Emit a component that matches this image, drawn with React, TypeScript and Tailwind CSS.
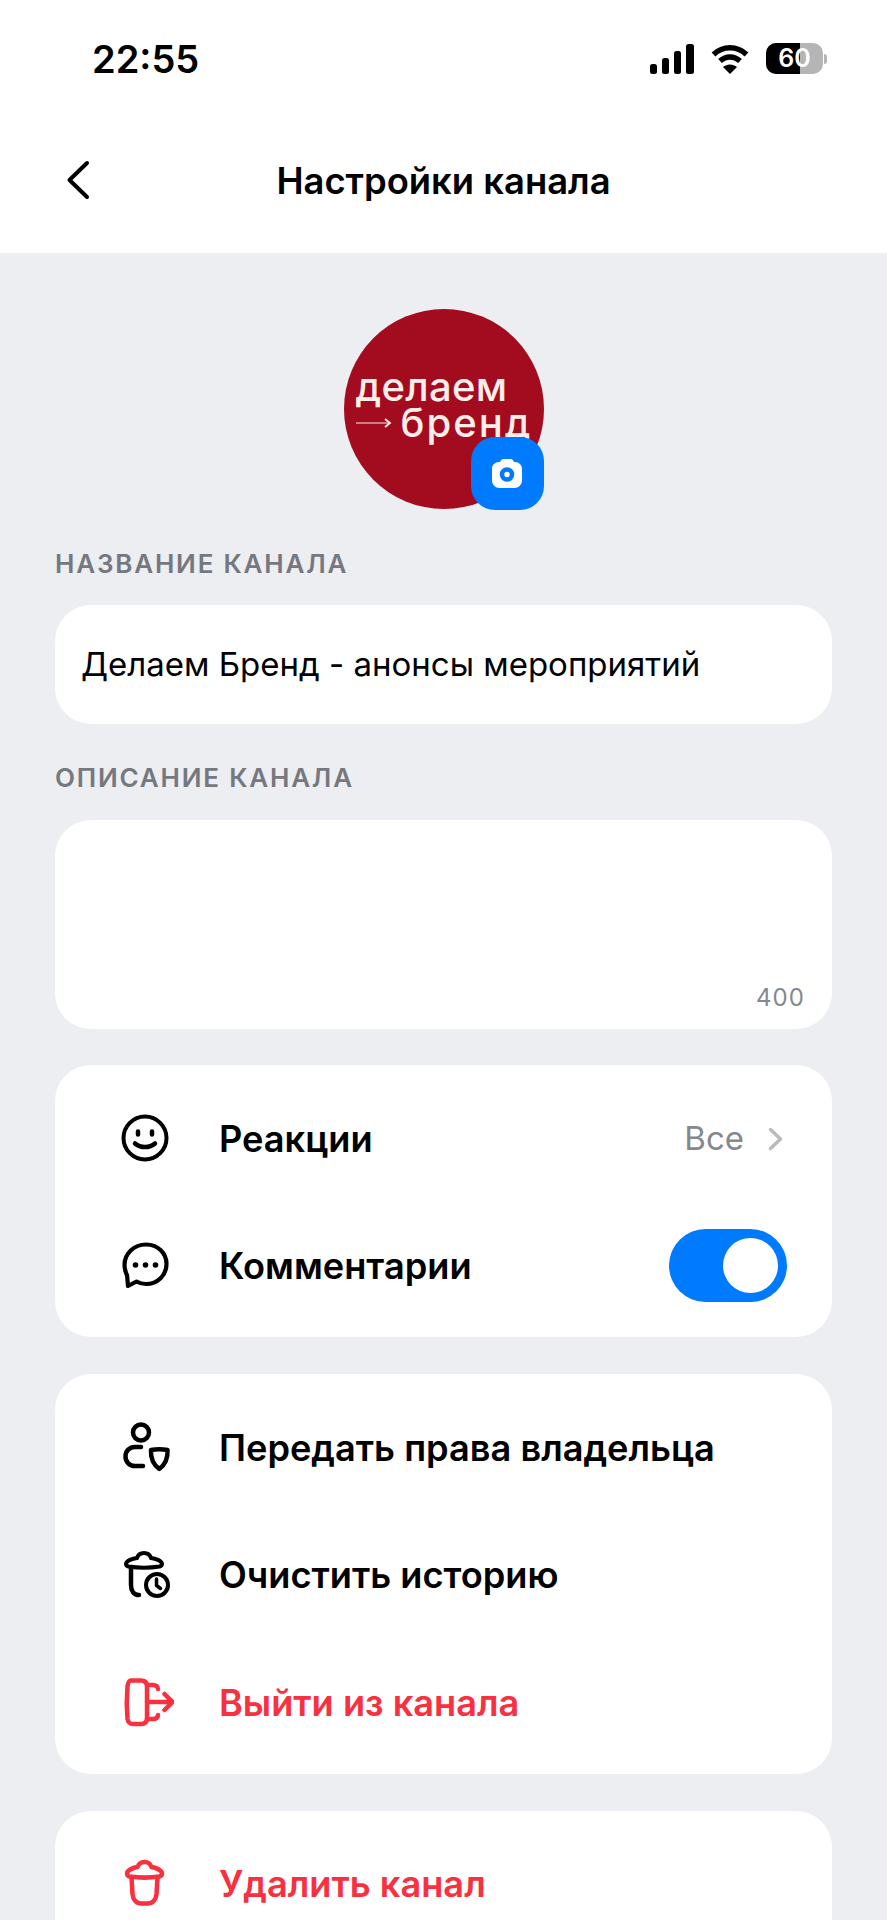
import React from 'react';

const red = 'text-[#f9303f]';

const Smile = () => (
  <svg width="50" height="50" viewBox="0 0 50 50" fill="none" stroke="currentColor" strokeWidth="4" strokeLinecap="round">
    <circle cx="25" cy="25" r="21.500" />
    <path d="M15 30.500c5.500 4.800 14.500 4.800 20 0" strokeWidth="4.500" />
    <path d="M18 18.500v3M32 18.500v3" strokeWidth="4.500" />
  </svg>
);

const Comment = () => (
  <svg width="50" height="50" viewBox="0 0 50 50" fill="none" stroke="currentColor" strokeWidth="4.200" strokeLinecap="round" strokeLinejoin="round">
    <path d="M26 4.500C14 4.500 4.500 13.500 4.500 25c0 4 1.200 7.500 2.600 10.500l.9 10.500 8.500-4.500c2.800 1.600 6 2.500 9.500 2.500 11.500 0 20.500-8.800 20.500-20S37.500 4.500 26 4.500z" />
    <circle cx="15.500" cy="25" r="2.800" fill="currentColor" stroke="none" />
    <circle cx="25.500" cy="25" r="2.800" fill="currentColor" stroke="none" />
    <circle cx="35.500" cy="25" r="2.800" fill="currentColor" stroke="none" />
  </svg>
);

const OwnerShield = () => (
  <svg width="52" height="52" viewBox="0 0 52 52" fill="none" stroke="currentColor" strokeWidth="4.500" strokeLinecap="round" strokeLinejoin="round">
    <circle cx="21" cy="11.500" r="8" />
    <path d="M21 26h-6C9.500 26 5.500 30 5.500 35.500S9.500 45 15 45h8" />
    <path d="M31 29c5.500-1 11-1 16.500 0 .5 8-1.500 14-8.250 19C32.500 43 30.500 37 31 29z" />
  </svg>
);

const TrashClock = () => (
  <svg width="50" height="50" viewBox="0 0 50 50" fill="none" stroke="currentColor" strokeWidth="4.500" strokeLinecap="round" strokeLinejoin="round">
    <path d="M6 15c0-3.500 7-5.500 11-6 1-3 4-5 7-5s6 2 7 5c4 .5 11 2.500 11 6 0 1-1 2-2.500 2.500-10 1.500-21 1.500-31 0C7 17 6 16 6 15z" strokeWidth="4" />
    <path d="M11 19v17c0 6 3 10 8 10" />
    <circle cx="37" cy="36" r="11" strokeWidth="4" />
    <path d="M36.500 30v6.500l4 3" strokeWidth="3.500" />
  </svg>
);

const Leave = () => (
  <svg width="54" height="50" viewBox="0 0 54 50" fill="none" stroke="currentColor" strokeWidth="4.500" strokeLinecap="round" strokeLinejoin="round">
    <path d="M11 3.500h10c4 0 6 2 6 6V41c0 4-2 6-6 6H13c-3.500 0-5-2-5.500-5C6.500 31 6.500 20 7.500 9.500 8 6 9 3.500 11 3.500z" />
    <path d="M27 8h6c3 0 5 1.500 5 4M27 42h6c3 0 5-1.500 5-4" />
    <path d="M27 25h25M44.500 17l8 8-8 8" />
  </svg>
);

const Trash = () => (
  <svg width="50" height="50" viewBox="0 0 50 50" fill="none" stroke="currentColor" strokeWidth="4.500" strokeLinecap="round" strokeLinejoin="round">
    <path d="M7 15.500c0-3.500 7-6 10.500-6.500 1-3 3.500-5 7-5s6 2 7 5c3.500.5 10.500 3 10.500 6.500 0 1.500-1 2.500-2.500 3-10 1.500-20 1.500-30 0-1.500-.5-2.500-1.500-2.500-3z" />
    <path d="M11.500 19l1 17c.5 6 4 9.500 9 9.500h6c5 0 8.500-3.500 9-9.500l1-17" />
  </svg>
);

function Label({ text }: { text: string }) {
  return <div className="text-[26px] leading-[30px] font-semibold tracking-[1.8px] text-[#75787f]">{text}</div>;
}

function Row({ icon, title, danger, children }: { icon: React.ReactNode; title: string; danger?: boolean; children?: React.ReactNode }) {
  return (
    <div className={`flex h-[127.5px] items-center pl-[65px] pr-[45px] ${danger ? red : 'text-black'}`}>
      <div className="-mt-[2px] w-[50px] shrink-0">{icon}</div>
      <div className="ml-[49px] flex-1 text-[36.2px] font-semibold">{title}</div>
      {children}
    </div>
  );
}

export default function App() {
  return (
    <div className="h-[1920px] w-[887px] overflow-hidden bg-[#eceef2] font-['Inter',sans-serif] text-black">
      {/* status bar + nav */}
      <div className="h-[253px] bg-white">
        <div className="flex h-[118px] items-start justify-between pl-[92px] pr-[60px] pt-[37px]">
          <div className="text-[38px] leading-[44px] font-semibold">22:55</div>
          <div className="flex items-center gap-[17px] pt-[6px]">
            <svg width="44" height="30" viewBox="0 0 44 30" fill="currentColor">
              <rect x="0" y="20" width="7" height="10" rx="2.500" />
              <rect x="12" y="14" width="7" height="16" rx="2.500" />
              <rect x="24" y="7" width="7" height="23" rx="2.500" />
              <rect x="36" y="0" width="8" height="30" rx="2.500" />
            </svg>
            <svg width="38" height="30" viewBox="0 0 38 30" fill="none" stroke="currentColor" strokeWidth="5.500">
              <path d="M2.500 10.500C12 1.500 26 1.500 35.500 10.500" />
              <path d="M9 17c6-5.500 14-5.500 20 0" />
              <path d="M19 30l-7-7c4-3.500 10-3.500 14 0z" fill="currentColor" stroke="none" />
            </svg>
            <div className="relative flex items-center">
              <div className="relative flex h-[31px] w-[57px] items-center justify-center overflow-hidden rounded-[10px] bg-[#b5b5b5]">
                <div className="absolute inset-y-0 left-0 w-[34px] bg-black" />
                <span className="relative text-[25px] leading-none font-semibold text-white">60</span>
              </div>
              <div className="ml-[1px] h-[10px] w-[3px] rounded-r-full bg-[#b5b5b5]" />
            </div>
          </div>
        </div>
        <div className="relative flex h-[120px] items-center justify-center">
          <svg className="absolute left-[66px] top-[42px]" width="24" height="40" viewBox="0 0 24 40" fill="none" stroke="currentColor" strokeWidth="4" strokeLinecap="round" strokeLinejoin="round">
            <path d="M21 3L3.500 20 21 37" />
          </svg>
          <div className="pt-[6px] text-[36.4px] font-semibold">Настройки канала</div>
        </div>
      </div>

      <div className="px-[55px] pt-[56px]">
        {/* avatar */}
        <div className="flex justify-center">
          <div className="relative h-[200px] w-[200px] rounded-full bg-[#a30b1f] text-[#fbeeea]">
            <div className="absolute left-[12px] top-[62px] text-[40px] leading-[32px] font-medium tracking-[0.3px]">делаем</div>
            <div className="absolute left-[57px] top-[98px] text-[40px] leading-[32px] font-medium tracking-[2px]">бренд</div>
            <svg className="absolute left-[12px] top-[106px]" width="36" height="16" viewBox="0 0 36 16" fill="none" stroke="currentColor" strokeWidth="1.200">
              <path d="M0 8h33" />
              <path d="M29 4l5 4-5 4" strokeWidth="1.800" />
            </svg>
            <div className="absolute -bottom-px right-0 flex h-[73px] w-[73px] items-center justify-center rounded-[24px] bg-[#007aff]">
              <svg width="30" height="29" viewBox="0 0 30 29">
                <path fill="#fff" d="M11.500 0h7c2 0 3 1.500 3.500 3h1c4 0 7 3 7 7v11c0 4.500-3 8-8 8H8c-5 0-8-3.500-8-8V10c0-4 3-7 7-7h1C8.500 1.500 9.500 0 11.500 0z" />
                <circle cx="15" cy="15.500" r="5" fill="none" stroke="#007aff" strokeWidth="4.500" />
              </svg>
            </div>
          </div>
        </div>

        <div className="mt-[40px]"><Label text="НАЗВАНИЕ КАНАЛА" /></div>
        <div className="mt-[26px] flex h-[119px] items-center rounded-[36px] bg-white px-[26px] text-[33px]">
          Делаем Бренд - анонсы мероприятий
        </div>

        <div className="mt-[39px]"><Label text="ОПИСАНИЕ КАНАЛА" /></div>
        <div className="relative mt-[27px] h-[209px] rounded-[36px] bg-white">
          <div className="absolute bottom-[17px] right-[27px] text-[24px] leading-[28px] tracking-[1.1px] text-[#85888e]">400</div>
        </div>

        <div className="mt-[36px] rounded-[36px] bg-white pt-[10px] pb-[7px]">
          <Row icon={<Smile />} title="Реакции">
            <span className="text-[33px] text-[#85888e]">Все</span>
            <svg className="ml-[24px] mr-[4px]" width="15" height="24" viewBox="0 0 15 24" fill="none" stroke="#b9bbbd" strokeWidth="3.500" strokeLinecap="round" strokeLinejoin="round">
              <path d="M2.500 2.500L12.500 12 2.500 21.500" />
            </svg>
          </Row>
          <Row icon={<Comment />} title="Комментарии">
            <div className="-mt-[2px] flex h-[73px] w-[118px] items-center justify-end rounded-full bg-[#007aff] pr-[9px]">
              <div className="h-[55px] w-[55px] rounded-full bg-white" />
            </div>
          </Row>
        </div>

        <div className="mt-[37px] rounded-[36px] bg-white pt-[10px] pb-[7px]">
          <Row icon={<OwnerShield />} title="Передать права владельца" />
          <Row icon={<TrashClock />} title="Очистить историю" />
          <Row icon={<Leave />} title="Выйти из канала" danger />
        </div>

        <div className="mt-[37px] rounded-[36px] bg-white pt-[10px] pb-[8px]">
          <Row icon={<Trash />} title="Удалить канал" danger />
        </div>
      </div>
    </div>
  );
}
